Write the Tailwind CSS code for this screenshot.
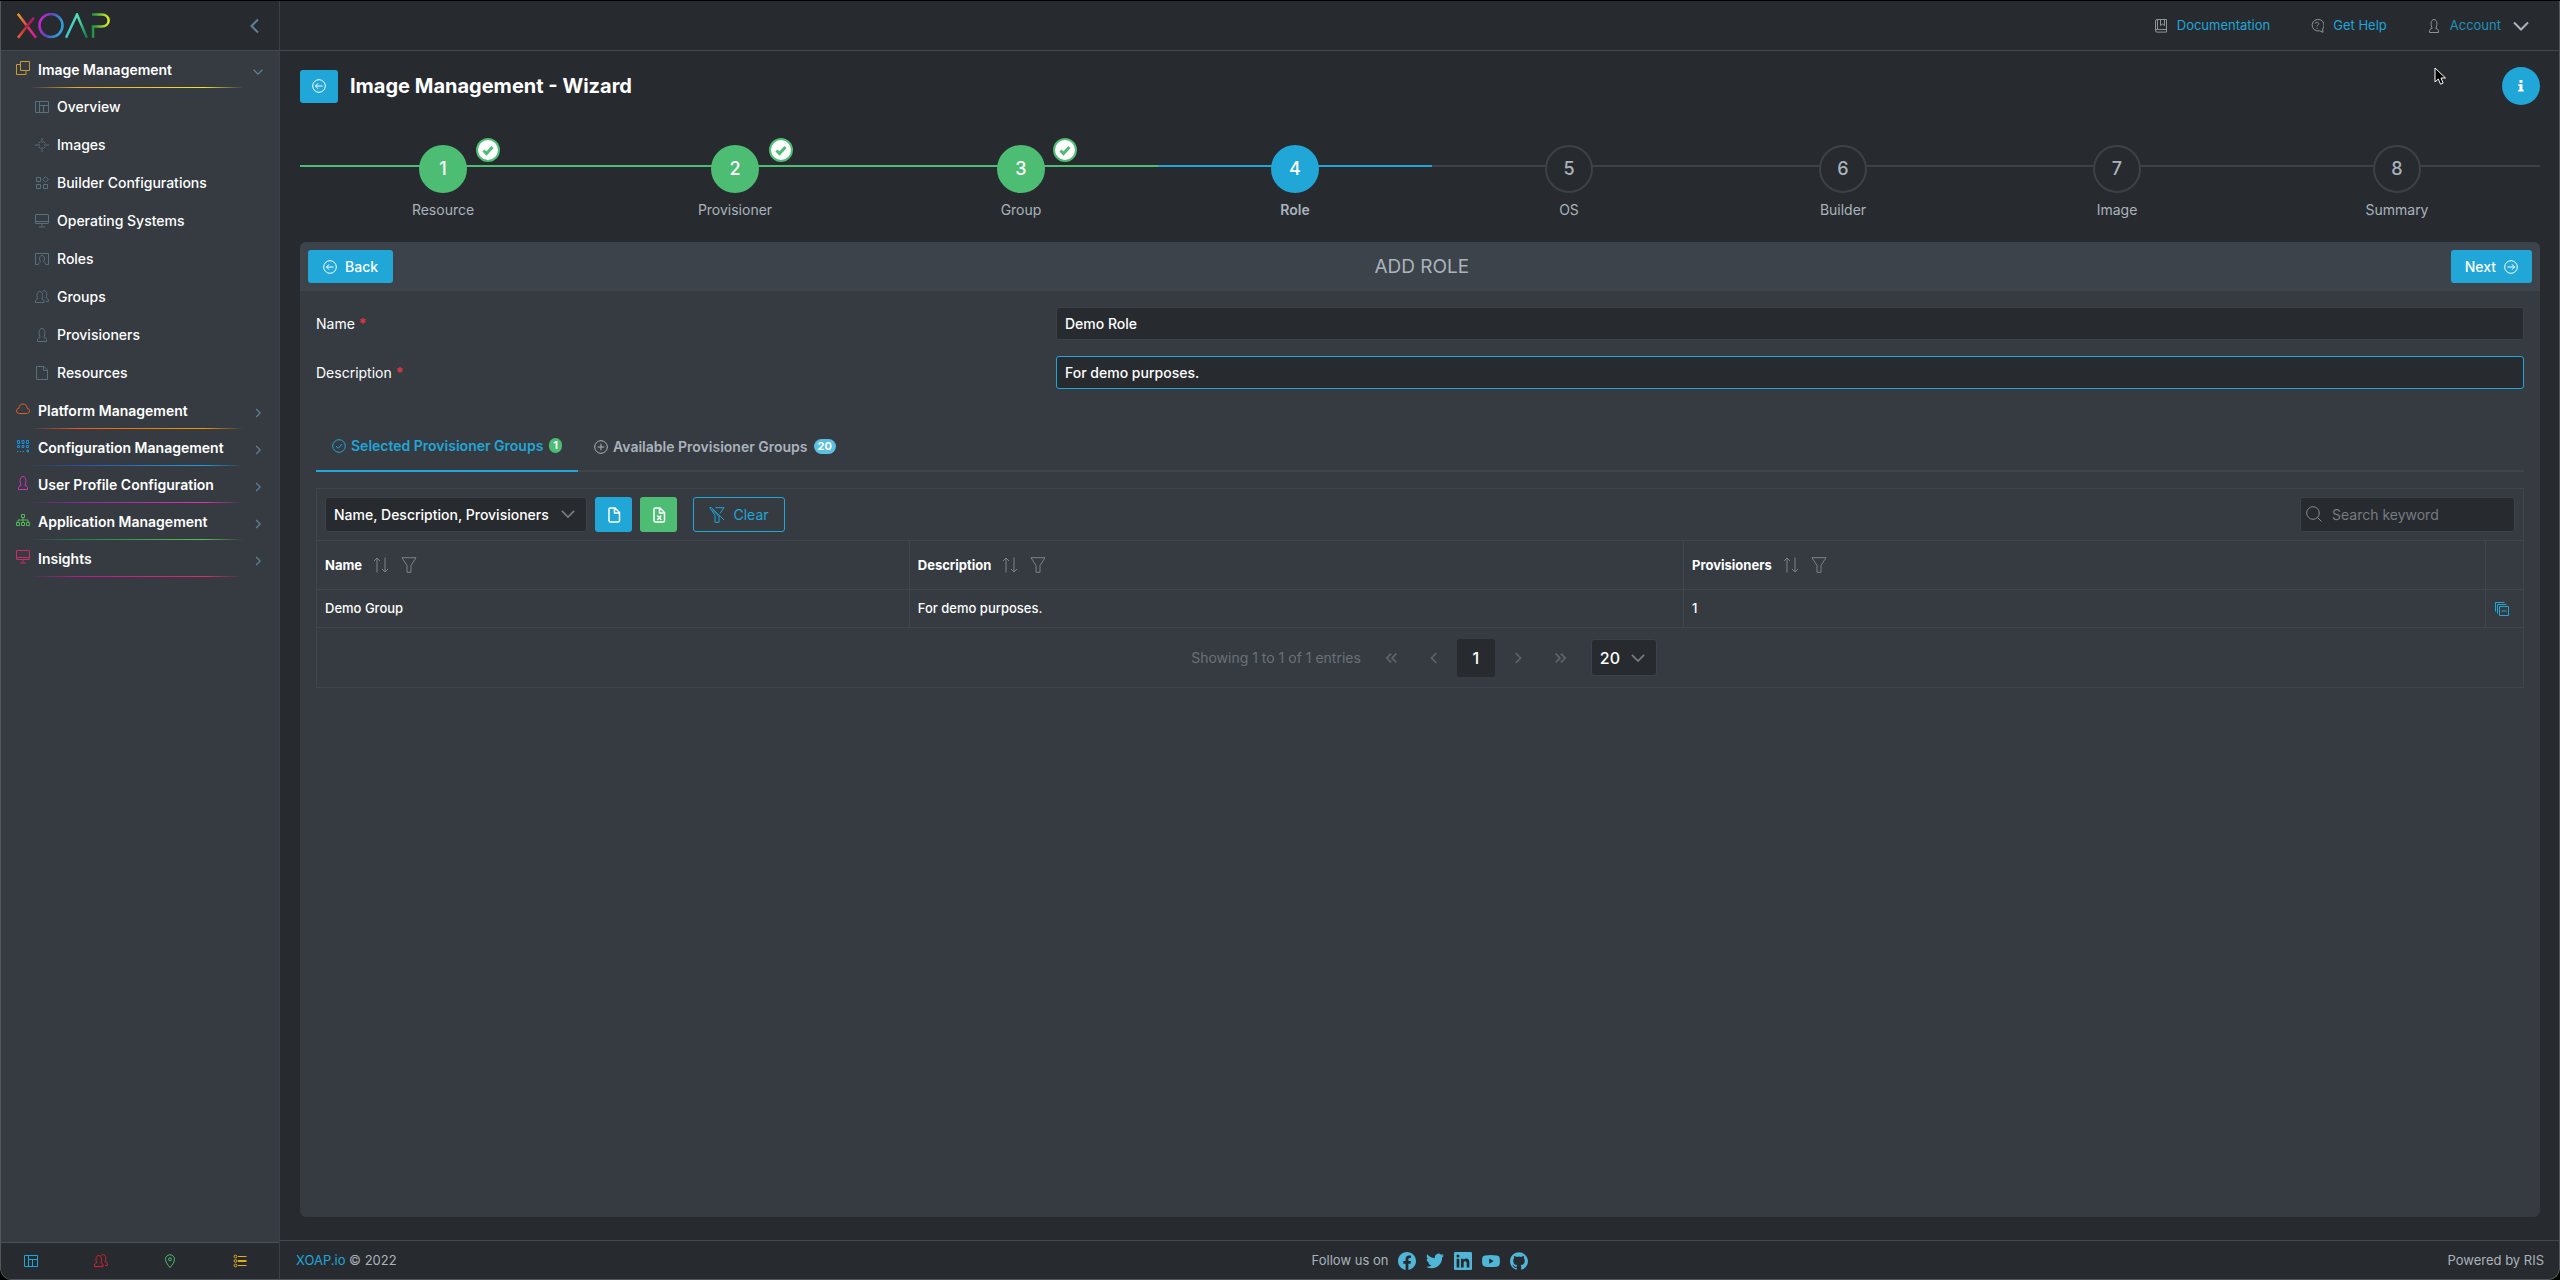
<!doctype html>
<html lang="en">

<head>
  <meta charset="UTF-8">
  <meta name="viewport" content="width=device-width, initial-scale=1.0">
  <title>XOAP - Image Management</title>
  <script src="https://cdn.jsdelivr.net/npm/@tailwindcss/browser@4"></script>
</head>

<body class="bg-black font-[Inter,sans-serif] text-sm text-[#aab3bc]">
  <!-- icon set -->
  <svg class="hidden">
    <symbol id="i-layers" viewBox="0 0 14 14"><path d="M4.500 .5h9v9h-9zM4 3.500H.5v10h9.500v-3.500" /></symbol>
    <symbol id="i-layout" viewBox="0 0 14 14"><path d="M.5 1.500h13v11H.5zM4.500 1.500v11M4.500 5.500h9M8.500 5.500v7" /></symbol>
    <symbol id="i-target" viewBox="0 0 14 14"><path d="M7 0v5M7 9v5M0 7h5M9 7h5M3.500 5.500l2-2M8.500 3.500l2 2M10.500 8.500l-2 2M5.500 10.500l-2-2" /></symbol>
    <symbol id="i-blocks" viewBox="0 0 14 14"><path d="M1.500 1.500h4v4h-4zM1.500 8.500h4v4h-4zM8.500 8.500h4v4h-4zM10.500 .7l2.800 2.800-2.800 2.800-2.800-2.800z" /></symbol>
    <symbol id="i-screen" viewBox="0 0 14 14"><path d="M1 .5h12q.5 0 .5.5v8q0 .5-.5.500H1q-.5 0-.5-.5V1q0-.5.5-.5zM.5 7.500h13M7 9.500v3M4 13h6" /></symbol>
    <symbol id="i-role" viewBox="0 0 14 14"><path d="M3 12.500H.5v-11h13v11H11M3.500 12.500c0-2 1.200-2 2-2.800C4 7.500 4.200 3.500 7 3.500s3 4 1.500 6.200c.8.800 2 .800 2 2.800" /></symbol>
    <symbol id="i-user" viewBox="0 0 14 14"><path d="M2.500 13.500c-.3-3 .7-3.400 2.700-4.200C3.500 6.500 3.500.5 7 .5s3.500 6 1.800 8.800c2 .8 3 1.200 2.700 4.200z" /></symbol>
    <symbol id="i-users" viewBox="0 0 14 14"><path d="M.5 12.500c-.2-2.600.5-3 2.300-3.700C1.500 6.500 1.500 1.500 4.800 1.500s3.200 5 2 7.300c1.700.7 2.500 1.100 2.300 3.700zM7.500 1.600C8 .9 8.500.7 9.300.7c3 0 3 4.700 1.700 6.900 1.900.7 2.500 1.200 2.400 3.900h-2.200" /></symbol>
    <symbol id="i-file" viewBox="0 0 14 14"><path d="M1.500 .5h7.500l3.500 3.500v9.500h-11zM8.500 .5v4h4" /></symbol>
    <symbol id="i-cloud" viewBox="0 0 14 14"><path d="M3.500 11.500C1.700 11.500.5 10.400.5 8.900S1.600 6.500 2.900 6.300C3 3.500 4.800 2 7 2s4 1.500 4.100 4.300c1.400.2 2.400 1.100 2.400 2.600s-1.200 2.600-3 2.600z" /></symbol>
    <symbol id="i-config" viewBox="0 0 14 14"><path d="M1.500 1.500h2v3h-2zM6 1.500h2v3H6zM10.500 1.500h2v3h-2zM1.500 6.500h2v2h-2zM6 6.500h2v2H6zM10.500 6.500h2v2h-2zM11 11h1.500v2H11zM1 12.500h1.500M4 12.500h1M6.500 12.500H8" /></symbol>
    <symbol id="i-tree" viewBox="0 0 14 14"><path d="M5.500 1.500h3v3h-3zM.5 9.500h3v3h-3zM5.500 9.500h3v3h-3zM10.500 9.500h3v3h-3zM7 4.500v5M2 9.500v-2.500h10v2.500" /></symbol>
    <symbol id="i-pin" viewBox="0 0 14 14"><path d="M7 13.500C4.500 10.500 2.500 8 2.500 5.300a4.500 4.500 0 0 1 9 0C11.500 8 9.500 10.500 7 13.500z" /><circle cx="7" cy="5.300" r="1.500" /></symbol>
    <symbol id="i-list" viewBox="0 0 14 14"><circle cx="2.500" cy="2.500" r="1.400" /><circle cx="2.500" cy="7" r="1.400" /><circle cx="2.500" cy="11.500" r="1.400" /><path d="M5 2.500h8.500M5 6.500h8.500M5 7.500h8.500M5 11.500h8.500" /></symbol>
    <symbol id="i-book" viewBox="0 0 14 14"><path d="M12.500 10.500h-9.500q-1.500 0-1.500 1.300t1.500 1.300h9.500M1.500 11.500V2q0-1.500 1.500-1.500h9.500v12.500M3.500 .5v10M6.500 .5v6l2-1.500 2 1.500v-6" /></symbol>
    <symbol id="i-help" viewBox="0 0 14 14"><path d="M13 13.300l-.4-3.300A6 5.800 0 1 0 9.500 11.800zM5.200 4.800c.1-2.200 3.600-2 3.500 0 0 1.300-1.700 1.300-1.700 2.700M7 8.800v1" /></symbol>
    <symbol id="i-left" viewBox="0 0 14 14"><circle cx="7" cy="7" r="6.300" /><path d="M10.500 7h-7M6 4.300 3.500 7 6 9.700" /></symbol>
    <symbol id="i-right" viewBox="0 0 14 14"><circle cx="7" cy="7" r="6.300" /><path d="M3.500 7h7M8 4.300 10.500 7 8 9.700" /></symbol>
    <symbol id="i-ok" viewBox="0 0 14 14"><circle cx="7" cy="7" r="6.300" /><path d="M4 7.200 6.200 9.300 10.200 5" /></symbol>
    <symbol id="i-plus" viewBox="0 0 14 14"><circle cx="7" cy="7" r="6.300" /><path d="M7 3.700v6.600M3.700 7h6.600" /></symbol>
    <symbol id="i-doc" viewBox="0 0 16 16"><path d="M4 1h5l4.500 4.500V13.500Q13.500 15 12 15H4.500Q3 15 3 13.500V2Q3 1 4 1zM8.500 1v5h5" /></symbol>
    <symbol id="i-xls" viewBox="0 0 16 16"><path d="M4 1h5l4.500 4.500V13.500Q13.500 15 12 15H4.500Q3 15 3 13.500V2Q3 1 4 1zM8.500 1v5h5M6.300 8.500l4 4.500M10.300 8.500l-4 4.500" /></symbol>
    <symbol id="i-filter" viewBox="0 0 16 16"><path d="M1 .7h14L10 8.500v6.800H6V8.500z" /></symbol>
    <symbol id="i-unfilter" viewBox="0 0 16 16"><path d="M6.500 .7h8.500L11 6.300M2.500 .7 15 13M1 .7 6 8.500v6.800h4V9M2.500 .7H.5M3.500 2.800 10 9.500" /></symbol>
    <symbol id="i-sort" viewBox="0 0 16 16"><path d="M4 15.500V1M1 4l3-3 3 3M12 .5V15M9 12l3 3 3-3" /></symbol>
    <symbol id="i-search" viewBox="0 0 16 16"><circle cx="7" cy="7" r="6.300" /><path d="M11.500 11.500 15.500 15.500" /></symbol>
    <symbol id="i-remove" viewBox="0 0 16 16"><path d="M5.500 5.500h9v9h-9zM3.500 12.500v-9h9M1.500 10.500v-9h9M7.500 10h5" /></symbol>
    <symbol id="i-down" viewBox="0 0 16 16"><path d="M1 4.500 8 11.500 15 4.500" /></symbol>
    <symbol id="i-next" viewBox="0 0 16 16"><path d="M5 1.500 11.500 8 5 14.500" /></symbol>
    <symbol id="i-prev" viewBox="0 0 16 16"><path d="M11 1.500 4.500 8 11 14.500" /></symbol>
    <symbol id="i-first" viewBox="0 0 16 16"><path d="M7 3 2 8 7 13M13 3 8 8 13 13" /></symbol>
    <symbol id="i-last" viewBox="0 0 16 16"><path d="M3 3 8 8 3 13M9 3 14 8 9 13" /></symbol>
    <symbol id="i-check" viewBox="0 0 14 14"><path d="M2.500 7.500 5.500 10.500 11.500 4" /></symbol>
  </svg>

  <div class="mt-px flex h-[calc(100vh-1px)] overflow-hidden rounded-b-xl border-x border-b border-[#51575b] bg-[#272b2f]">

    <aside class="flex w-[279px] shrink-0 flex-col border-r border-[#3a4045] bg-[#353b41]">
      <div class="flex h-[50px] items-center justify-between border-b border-[#41474c] bg-[#272b2f] pr-4 pl-4">
        <svg class="h-[26px] w-[93px] fill-none" viewBox="0 0 93 26" stroke-width="2.500" role="img" aria-label="XOAP">
          <defs>
            <linearGradient id="g1"><stop stop-color="#f0a020" /><stop offset=".5" stop-color="#e04050" /><stop offset="1" stop-color="#e010b0" /></linearGradient>
            <linearGradient id="g2" x2="1" y2=".3"><stop stop-color="#e81ad8" /><stop offset=".5" stop-color="#5a48b8" /><stop offset="1" stop-color="#30a0d8" /></linearGradient>
            <linearGradient id="g3"><stop stop-color="#40c0d8" /><stop offset=".6" stop-color="#50e0b0" /><stop offset="1" stop-color="#10753a" /></linearGradient>
            <linearGradient id="g4"><stop stop-color="#159045" /><stop offset="1" stop-color="#d8f020" /></linearGradient>
            <linearGradient id="g5" y1="1" x2="1" y2="0"><stop stop-color="#f06030" /><stop offset=".6" stop-color="#b02040" /><stop offset="1" stop-color="#c01080" /></linearGradient>
          </defs>
          <path stroke="url(#g1)" d="M.8.8 19 24.800" />
          <path stroke="url(#g5)" d="M16.800 4.800 1 24.800" />
          <circle stroke="url(#g2)" cx="34" cy="12.500" r="11.500" />
          <path stroke="url(#g3)" d="M49 24.800 60 1.500 70 24.800" />
          <path stroke="url(#g4)" d="M76 24.800V13.500H84.500C94 13.500 94 1.500 84.500 1.500H75" />
        </svg>
        <button aria-label="Collapse menu"><svg class="size-4 fill-none stroke-[#5f7f92] stroke-2"><use href="#i-prev" /></svg></button>
      </div>

      <nav class="flex-1 fill-none font-medium text-white">
        <a href="#" class="relative flex h-[37px] items-center pr-3 pl-[15px] font-semibold">
          <svg class="mr-2 mb-1 size-[14px] stroke-[#c99a35]"><use href="#i-layers" /></svg>
          <span class="flex-1">Image Management</span>
          <svg class="mt-1 mr-1 size-[10px] stroke-[#5f7f92] stroke-2" viewBox="0 0 16 16"><use href="#i-down" /></svg>
          <span class="absolute inset-x-4 bottom-0 h-px bg-[linear-gradient(90deg,transparent_5%,#e8a52c_24%,#f2e230_76%,transparent_92%)]"></span>
        </a>
        <a href="#" class="flex h-[38px] items-center gap-2 pl-[34px]"><svg class="size-[14px] stroke-[#57707e]"><use href="#i-layout" /></svg>Overview</a>
        <a href="#" class="flex h-[38px] items-center gap-2 pl-[34px]"><svg class="size-[14px] stroke-[#57707e]"><use href="#i-target" /></svg>Images</a>
        <a href="#" class="flex h-[38px] items-center gap-2 pl-[34px]"><svg class="size-[14px] stroke-[#57707e]"><use href="#i-blocks" /></svg>Builder Configurations</a>
        <a href="#" class="flex h-[38px] items-center gap-2 pl-[34px]"><svg class="size-[14px] stroke-[#57707e]"><use href="#i-screen" /></svg>Operating Systems</a>
        <a href="#" class="flex h-[38px] items-center gap-2 pl-[34px]"><svg class="size-[14px] stroke-[#57707e]"><use href="#i-role" /></svg>Roles</a>
        <a href="#" class="flex h-[38px] items-center gap-2 pl-[34px]"><svg class="size-[14px] stroke-[#57707e]"><use href="#i-users" /></svg>Groups</a>
        <a href="#" class="flex h-[38px] items-center gap-2 pl-[34px]"><svg class="size-[14px] stroke-[#57707e]"><use href="#i-user" /></svg>Provisioners</a>
        <a href="#" class="flex h-[38px] items-center gap-2 pl-[34px]"><svg class="size-[14px] stroke-[#57707e]"><use href="#i-file" /></svg>Resources</a>
        <a href="#" class="relative flex h-[37px] items-center pr-3 pl-[15px] font-semibold">
          <svg class="mr-2 mb-1 size-[14px] stroke-[#e0602a]"><use href="#i-cloud" /></svg>
          <span class="flex-1">Platform Management</span>
          <svg class="mt-1 mr-1 size-[10px] stroke-[#5f7f92] stroke-2" viewBox="0 0 16 16"><use href="#i-next" /></svg>
          <span class="absolute inset-x-4 bottom-0 h-px bg-[linear-gradient(90deg,transparent_5%,#f0561c_24%,#f09a00_76%,transparent_92%)]"></span>
        </a>
        <a href="#" class="relative flex h-[37px] items-center pr-3 pl-[15px] font-semibold">
          <svg class="mr-2 mb-1 size-[14px] stroke-[#1492dc]"><use href="#i-config" /></svg>
          <span class="flex-1">Configuration Management</span>
          <svg class="mt-1 mr-1 size-[10px] stroke-[#5f7f92] stroke-2" viewBox="0 0 16 16"><use href="#i-next" /></svg>
          <span class="absolute inset-x-4 bottom-0 h-px bg-[linear-gradient(90deg,transparent_5%,#2a50a8_24%,#1ba0e0_76%,transparent_92%)]"></span>
        </a>
        <a href="#" class="relative flex h-[37px] items-center pr-3 pl-[15px] font-semibold">
          <svg class="mr-2 mb-1 size-[14px] stroke-[#cf35b8]"><use href="#i-user" /></svg>
          <span class="flex-1">User Profile Configuration</span>
          <svg class="mt-1 mr-1 size-[10px] stroke-[#5f7f92] stroke-2" viewBox="0 0 16 16"><use href="#i-next" /></svg>
          <span class="absolute inset-x-4 bottom-0 h-px bg-[linear-gradient(90deg,transparent_5%,#8a2aa0_24%,#e032b0_76%,transparent_92%)]"></span>
        </a>
        <a href="#" class="relative flex h-[37px] items-center pr-3 pl-[15px] font-semibold">
          <svg class="mr-2 mb-1 size-[14px] stroke-[#55b859]"><use href="#i-tree" /></svg>
          <span class="flex-1">Application Management</span>
          <svg class="mt-1 mr-1 size-[10px] stroke-[#5f7f92] stroke-2" viewBox="0 0 16 16"><use href="#i-next" /></svg>
          <span class="absolute inset-x-4 bottom-0 h-px bg-[linear-gradient(90deg,transparent_5%,#208048_24%,#58c058_76%,transparent_92%)]"></span>
        </a>
        <a href="#" class="relative flex h-[37px] items-center pr-3 pl-[15px] font-semibold">
          <svg class="mr-2 mb-1 size-[14px] stroke-[#c42f6c]"><use href="#i-screen" /></svg>
          <span class="flex-1">Insights</span>
          <svg class="mt-1 mr-1 size-[10px] stroke-[#5f7f92] stroke-2" viewBox="0 0 16 16"><use href="#i-next" /></svg>
          <span class="absolute inset-x-4 bottom-0 h-px bg-[linear-gradient(90deg,transparent_5%,#b81890_24%,#e02a70_76%,transparent_92%)]"></span>
        </a>
      </nav>

      <div class="grid h-[37px] grid-cols-4 border-t border-[#46525b] bg-[#272b2f] fill-none">
        <a href="#" aria-label="Overview" class="flex items-center pl-[23px]"><svg class="size-[14px] stroke-[#1fa6d8]"><use href="#i-layout" /></svg></a>
        <a href="#" aria-label="Users" class="flex items-center pl-[23px]"><svg class="size-[14px] stroke-[#dc2030]"><use href="#i-users" /></svg></a>
        <a href="#" aria-label="Locations" class="flex items-center pl-[23px]"><svg class="size-[14px] stroke-[#4dbd74]"><use href="#i-pin" /></svg></a>
        <a href="#" aria-label="Tasks" class="flex items-center pl-[23px]"><svg class="size-[14px] stroke-[#e0ac21]"><use href="#i-list" /></svg></a>
      </div>
    </aside>

    <div class="flex min-w-0 flex-1 flex-col">
      <header class="flex h-[50px] items-center justify-end border-b border-[#41474c] pr-[30px] text-[13px] text-[#21a6d8]">
        <a href="#" class="mr-10 flex items-center gap-[9px]"><svg class="size-[14px] fill-none stroke-[#8c949b]"><use href="#i-book" /></svg>Documentation</a>
        <a href="#" class="mr-10 flex items-center gap-[9px]"><svg class="size-[14px] fill-none stroke-[#8c949b]"><use href="#i-help" /></svg>Get Help</a>
        <button class="flex items-center gap-[9px] text-[#2190ba]"><svg class="size-[14px] fill-none stroke-[#8c949b]"><use href="#i-user" /></svg>Account<svg class="ml-[3px] size-4 fill-none stroke-[#aab3bc] stroke-2"><use href="#i-down" /></svg></button>
      </header>

      <main class="flex min-h-0 flex-1 flex-col pt-4 pr-[19px] pb-[23px] pl-5">
        <div class="flex h-[38px] items-center">
          <button aria-label="Back to overview" class="flex h-[33px] w-[38px] items-center justify-center rounded-[3px] bg-[#21a6d8]"><svg class="size-[14px] fill-none stroke-white"><use href="#i-left" /></svg></button>
          <h1 class="ml-3 flex-1 text-[20px] font-bold text-white">Image Management - Wizard</h1>
          <button aria-label="Info" class="flex size-[38px] items-center justify-center rounded-full bg-[#21a6d8]">
            <svg class="h-3 w-[6px] fill-white" viewBox="0 0 6 12"><path d="M1.500 0h3v2.800h-3zM.3 4.200h4.200v5.600H5.700V11.500H.3V9.800h1.200V6H.3z" /></svg>
          </button>
        </div>

        <ol class="mt-10 flex h-[97px] text-center">
          <li class="relative flex-[286]">
            <span class="absolute inset-x-0 top-5 h-[2px] bg-[#4dbd74]"></span>
            <span class="relative mx-auto flex size-12 items-center justify-center rounded-full bg-[#4dbd74] text-lg font-medium text-white">1</span>
            <span class="absolute -top-[7px] left-[61.5%] flex size-6 items-center justify-center rounded-full border-2 border-[#4dbd74] bg-white"><svg class="size-[14px] fill-none stroke-[#4dbd74] stroke-3"><use href="#i-check" /></svg></span>
            <span class="mt-[7px] block">Resource</span>
          </li>
          <li class="relative flex-[298]">
            <span class="absolute inset-x-0 top-5 h-[2px] bg-[#4dbd74]"></span>
            <span class="relative mx-auto flex size-12 items-center justify-center rounded-full bg-[#4dbd74] text-lg font-medium text-white">2</span>
            <span class="absolute -top-[7px] left-[61.5%] flex size-6 items-center justify-center rounded-full border-2 border-[#4dbd74] bg-white"><svg class="size-[14px] fill-none stroke-[#4dbd74] stroke-3"><use href="#i-check" /></svg></span>
            <span class="mt-[7px] block">Provisioner</span>
          </li>
          <li class="relative flex-[274]">
            <span class="absolute inset-x-0 top-5 h-[2px] bg-[#4dbd74]"></span>
            <span class="relative mx-auto flex size-12 items-center justify-center rounded-full bg-[#4dbd74] text-lg font-medium text-white">3</span>
            <span class="absolute -top-[7px] left-[61.5%] flex size-6 items-center justify-center rounded-full border-2 border-[#4dbd74] bg-white"><svg class="size-[14px] fill-none stroke-[#4dbd74] stroke-3"><use href="#i-check" /></svg></span>
            <span class="mt-[7px] block">Group</span>
          </li>
          <li class="relative flex-[274]" aria-current="step">
            <span class="absolute inset-x-0 top-5 h-[2px] bg-[#21a6d8]"></span>
            <span class="relative mx-auto flex size-12 items-center justify-center rounded-full bg-[#21a6d8] text-lg font-medium text-white">4</span>
            <span class="mt-[7px] block font-semibold">Role</span>
          </li>
          <li class="relative flex-[274]">
            <span class="absolute inset-x-0 top-5 h-[2px] bg-[#3b4249]"></span>
            <span class="relative mx-auto flex size-12 items-center justify-center rounded-full border-2 border-[#3b4249] bg-[#272b2f] text-lg font-medium">5</span>
            <span class="mt-[7px] block">OS</span>
          </li>
          <li class="relative flex-[274]">
            <span class="absolute inset-x-0 top-5 h-[2px] bg-[#3b4249]"></span>
            <span class="relative mx-auto flex size-12 items-center justify-center rounded-full border-2 border-[#3b4249] bg-[#272b2f] text-lg font-medium">6</span>
            <span class="mt-[7px] block">Builder</span>
          </li>
          <li class="relative flex-[274]">
            <span class="absolute inset-x-0 top-5 h-[2px] bg-[#3b4249]"></span>
            <span class="relative mx-auto flex size-12 items-center justify-center rounded-full border-2 border-[#3b4249] bg-[#272b2f] text-lg font-medium">7</span>
            <span class="mt-[7px] block">Image</span>
          </li>
          <li class="relative flex-[286]">
            <span class="absolute inset-x-0 top-5 h-[2px] bg-[#3b4249]"></span>
            <span class="relative mx-auto flex size-12 items-center justify-center rounded-full border-2 border-[#3b4249] bg-[#272b2f] text-lg font-medium">8</span>
            <span class="mt-[7px] block">Summary</span>
          </li>
        </ol>

        <section class="min-h-0 flex-1 overflow-hidden rounded-md bg-[#353b41]">
          <div class="flex h-[49px] items-center justify-between bg-[#3c434a] px-2">
            <button class="flex h-[33px] items-center gap-2 rounded-[3px] bg-[#21a6d8] px-[15px] font-medium text-white"><svg class="size-[14px] fill-none stroke-white"><use href="#i-left" /></svg>Back</button>
            <h2 class="text-[19px]">ADD ROLE</h2>
            <button class="flex h-[33px] items-center gap-2 rounded-[3px] bg-[#21a6d8] px-[14px] font-medium text-white">Next<svg class="size-[14px] fill-none stroke-white"><use href="#i-right" /></svg></button>
          </div>

          <div class="px-4 pt-4 text-white">
            <div class="flex items-center">
              <label for="name" class="w-1/3">Name <span class="font-bold text-[#e03546]">*</span></label>
              <input id="name" type="text" value="Demo Role" class="ml-1 h-[33px] flex-1 rounded-[3px] border border-[#3c4248] bg-[#272b2f] px-2 font-medium">
            </div>
            <div class="mt-4 flex items-center">
              <label for="description" class="w-1/3">Description <span class="font-bold text-[#e03546]">*</span></label>
              <input id="description" type="text" value="For demo purposes." class="ml-1 h-[33px] flex-1 rounded-[3px] border border-[#21a6d8] bg-[#272b2f] px-2 font-medium outline-none">
            </div>

            <div class="mt-8 flex h-[51px] border-b-2 border-[#3f454b] font-semibold" role="tablist">
              <button role="tab" aria-selected="true" class="-mb-[2px] flex items-center border-b-2 border-[#21a6d8] px-4 text-[#21a6d8]"><svg class="mr-[5px] size-[14px] fill-none stroke-[#21a6d8]"><use href="#i-ok" /></svg>Selected Provisioner Groups<span class="ml-[6px] rounded-full bg-[#4dbd74] px-1 text-[11px] leading-[15px] font-bold text-white">1</span></button>
              <button role="tab" aria-selected="false" class="-mb-[2px] flex items-center px-4 text-[#aab3bc]"><svg class="mr-[5px] size-[14px] fill-none stroke-[#aab3bc]"><use href="#i-plus" /></svg>Available Provisioner Groups<span class="ml-[6px] rounded-full bg-[#5bc0de] px-1 text-[11px] leading-[15px] font-bold text-white">20</span></button>
            </div>

            <div class="mt-4 border border-[#3e454b]">
              <div class="flex h-[51px] items-center px-2">
                <div class="relative">
                  <select aria-label="Columns" class="h-[35px] w-[262px] appearance-none rounded-[3px] border border-[#3c4248] bg-[#272b2f] pr-8 pl-2 font-medium">
                    <option>Name, Description, Provisioners</option>
                  </select>
                  <svg class="pointer-events-none absolute top-[10px] right-3 size-[14px] fill-none stroke-[#767c82] stroke-2" viewBox="0 0 16 16"><use href="#i-down" /></svg>
                </div>
                <button aria-label="Export CSV" class="ml-2 flex h-[35px] w-[37px] items-center justify-center rounded-[3px] bg-[#21a6d8]"><svg class="size-4 fill-none stroke-white stroke-[1.5]"><use href="#i-doc" /></svg></button>
                <button aria-label="Export XLSX" class="ml-2 flex h-[35px] w-[37px] items-center justify-center rounded-[3px] bg-[#4dbd74]"><svg class="size-4 fill-none stroke-white stroke-[1.5]"><use href="#i-xls" /></svg></button>
                <button class="ml-4 flex h-[35px] w-[92px] items-center justify-center gap-2 rounded-[3px] border border-[#21a6d8] text-[#21a6d8]"><svg class="size-4 fill-none stroke-[#21a6d8]"><use href="#i-unfilter" /></svg>Clear</button>
                <div class="relative ml-auto">
                  <svg class="absolute top-[9px] left-[6px] size-4 fill-none stroke-[#868c92]"><use href="#i-search" /></svg>
                  <input type="text" aria-label="Search keyword" placeholder="Search keyword" class="h-[35px] w-[215px] rounded-[3px] border border-[#3c4248] bg-[#272b2f] pr-2 pl-[31px] placeholder:text-[#767c82]">
                </div>
              </div>

              <table class="w-full table-fixed border-y border-[#3e454b] text-left text-[13px]">
                <colgroup><col class="w-[26.850%]"><col class="w-[35.100%]"><col><col class="w-[38px]"></colgroup>
                <thead>
                  <tr class="h-[49px] border-b border-[#3e454b]">
                    <th class="border-r border-[#3e454b] px-2"><span class="flex items-center">Name<svg class="ml-[11px] size-4 fill-none stroke-[#7c8288]"><use href="#i-sort" /></svg><svg class="ml-3 size-4 fill-none stroke-[#7c8288]"><use href="#i-filter" /></svg></span></th>
                    <th class="border-r border-[#3e454b] px-2"><span class="flex items-center">Description<svg class="ml-[11px] size-4 fill-none stroke-[#7c8288]"><use href="#i-sort" /></svg><svg class="ml-3 size-4 fill-none stroke-[#7c8288]"><use href="#i-filter" /></svg></span></th>
                    <th class="border-r border-[#3e454b] px-2"><span class="flex items-center">Provisioners<svg class="ml-[11px] size-4 fill-none stroke-[#7c8288]"><use href="#i-sort" /></svg><svg class="ml-3 size-4 fill-none stroke-[#7c8288]"><use href="#i-filter" /></svg></span></th>
                    <th></th>
                  </tr>
                </thead>
                <tbody>
                  <tr class="h-[38px] font-medium">
                    <td class="border-r border-[#3e454b] px-2">Demo Group</td>
                    <td class="border-r border-[#3e454b] px-2">For demo purposes.</td>
                    <td class="border-r border-[#3e454b] px-2">1</td>
                    <td class="px-2"><button aria-label="Remove" class="block"><svg class="size-4 fill-none stroke-[#21a6d8]"><use href="#i-remove" /></svg></button></td>
                  </tr>
                </tbody>
              </table>

              <div class="flex h-[59px] items-center justify-center pl-2 text-[#6b7177]">
                <span class="mr-3">Showing 1 to 1 of 1 entries</span>
                <button aria-label="First page" class="flex size-[38px] items-center justify-center"><svg class="size-[14px] fill-none stroke-[#5e656b] stroke-2" viewBox="0 0 16 16"><use href="#i-first" /></svg></button>
                <button aria-label="Previous page" class="ml-1 flex size-[38px] items-center justify-center"><svg class="size-3 fill-none stroke-[#5e656b] stroke-2" viewBox="0 0 16 16"><use href="#i-prev" /></svg></button>
                <button class="ml-1 size-[38px] rounded-[3px] bg-[#272b2f] text-base font-medium text-white">1</button>
                <button aria-label="Next page" class="ml-1 flex size-[38px] items-center justify-center"><svg class="size-3 fill-none stroke-[#5e656b] stroke-2" viewBox="0 0 16 16"><use href="#i-next" /></svg></button>
                <button aria-label="Last page" class="ml-1 flex size-[38px] items-center justify-center"><svg class="size-[14px] fill-none stroke-[#5e656b] stroke-2" viewBox="0 0 16 16"><use href="#i-last" /></svg></button>
                <div class="relative ml-3">
                  <select aria-label="Rows per page" class="h-[37px] w-[66px] appearance-none rounded-[3px] border border-[#3c4248] bg-[#272b2f] pl-2 text-base font-medium text-white">
                    <option>20</option>
                  </select>
                  <svg class="pointer-events-none absolute top-3 right-3 size-[14px] fill-none stroke-[#767c82] stroke-2" viewBox="0 0 16 16"><use href="#i-down" /></svg>
                </div>
              </div>
            </div>
          </div>
        </section>
      </main>

      <footer class="flex h-[39px] items-center border-t border-[#41474c] pt-px pr-[15px] pl-4 text-[13px]">
        <p class="flex-1"><a href="#" class="text-[#21a6d8]">XOAP.io</a> © 2022</p>
        <div class="flex items-center gap-[10px] fill-[#4fb6d8]">
          <span>Follow us on</span>
          <a href="#" aria-label="Facebook"><svg class="size-[18px]" viewBox="0 0 24 24"><path d="M24 12.070C24 5.440 18.630.07 12 .07S0 5.440 0 12.070c0 5.990 4.390 10.950 10.130 11.850v-8.380H7.080v-3.470h3.050V9.430c0-3.010 1.790-4.670 4.530-4.670 1.310 0 2.690.24 2.690.24v2.950h-1.520c-1.490 0-1.950.93-1.950 1.880v2.240h3.330l-.53 3.470h-2.800v8.380C19.610 23.020 24 18.060 24 12.070z" /></svg></a>
          <a href="#" aria-label="Twitter"><svg class="size-[18px]" viewBox="0 0 24 24"><path d="M23.950 4.570a10 10 0 0 1-2.820.78 4.960 4.960 0 0 0 2.160-2.730 9.900 9.900 0 0 1-3.120 1.190 4.920 4.920 0 0 0-8.380 4.480C7.690 8.090 4.070 6.130 1.640 3.160a4.820 4.820 0 0 0-.67 2.480c0 1.710.87 3.210 2.190 4.100a4.900 4.900 0 0 1-2.230-.62v.06a4.920 4.920 0 0 0 3.950 4.830 5 5 0 0 1-2.210.08 4.940 4.940 0 0 0 4.600 3.420A9.870 9.870 0 0 1 0 19.540a13.990 13.990 0 0 0 7.560 2.210c9.050 0 14-7.500 14-13.980 0-.21 0-.42-.02-.63a9.940 9.940 0 0 0 2.460-2.550z" /></svg></a>
          <a href="#" aria-label="LinkedIn"><svg class="size-[18px]" viewBox="0 0 24 24"><path d="M1.500 0h21Q24 0 24 1.500v21q0 1.500-1.500 1.500h-21Q0 24 0 22.500v-21Q0 0 1.500 0zm2 9v11.500h3.600V9zM5.300 3.300a2.050 2.050 0 1 0 0 4.100 2.050 2.050 0 0 0 0-4.100zM9.300 9v11.500h3.600v-5.700c0-3.300 4-3.500 4 0v5.700h3.600v-6.900c0-5.700-5.700-5.900-7.600-3V9z" fill-rule="evenodd" /></svg></a>
          <a href="#" aria-label="YouTube"><svg class="size-[18px]" viewBox="0 0 24 24"><path d="M4 4.500Q12 3.600 20 4.500 23.300 4.800 23.600 8q.6 4 0 8-.3 3.200-3.600 3.500-8 .9-16 0Q.7 19.200.4 16q-.6-4 0-8Q.7 4.800 4 4.500zm5.600 4v7l6-3.500z" fill-rule="evenodd" /></svg></a>
          <a href="#" aria-label="GitHub"><svg class="size-[18px]" viewBox="0 0 24 24"><path d="M12 .3a12 12 0 0 0-3.800 23.380c.6.120.83-.26.83-.57L9 21.070c-3.340.72-4.040-1.610-4.040-1.610-.55-1.390-1.340-1.760-1.340-1.760-1.080-.74.090-.73.090-.73 1.200.09 1.840 1.240 1.840 1.240 1.070 1.830 2.810 1.300 3.490 1 .11-.78.420-1.310.76-1.610-2.660-.3-5.470-1.330-5.470-5.930 0-1.310.47-2.380 1.240-3.220-.14-.3-.54-1.520.1-3.180 0 0 1.010-.32 3.300 1.230a11.500 11.500 0 0 1 6.020 0c2.280-1.550 3.290-1.230 3.290-1.230.64 1.660.24 2.880.12 3.180a4.650 4.650 0 0 1 1.230 3.220c0 4.610-2.810 5.620-5.480 5.920.42.360.81 1.100.81 2.220l-.01 3.290c0 .31.200.69.820.57A12 12 0 0 0 12 .3z" /></svg></a>
        </div>
        <p class="flex-1 text-right">Powered by RIS</p>
      </footer>
    </div>
  </div>

  <!-- mouse pointer -->
  <svg class="fixed top-[67px] right-[113px] h-5 w-[13px] fill-black stroke-white" viewBox="0 0 13 20"><path d="M1 1v14l3.300-3 2.200 5.200 2.600-1.100L7 11h4.500z" /></svg>
</body>

</html>
